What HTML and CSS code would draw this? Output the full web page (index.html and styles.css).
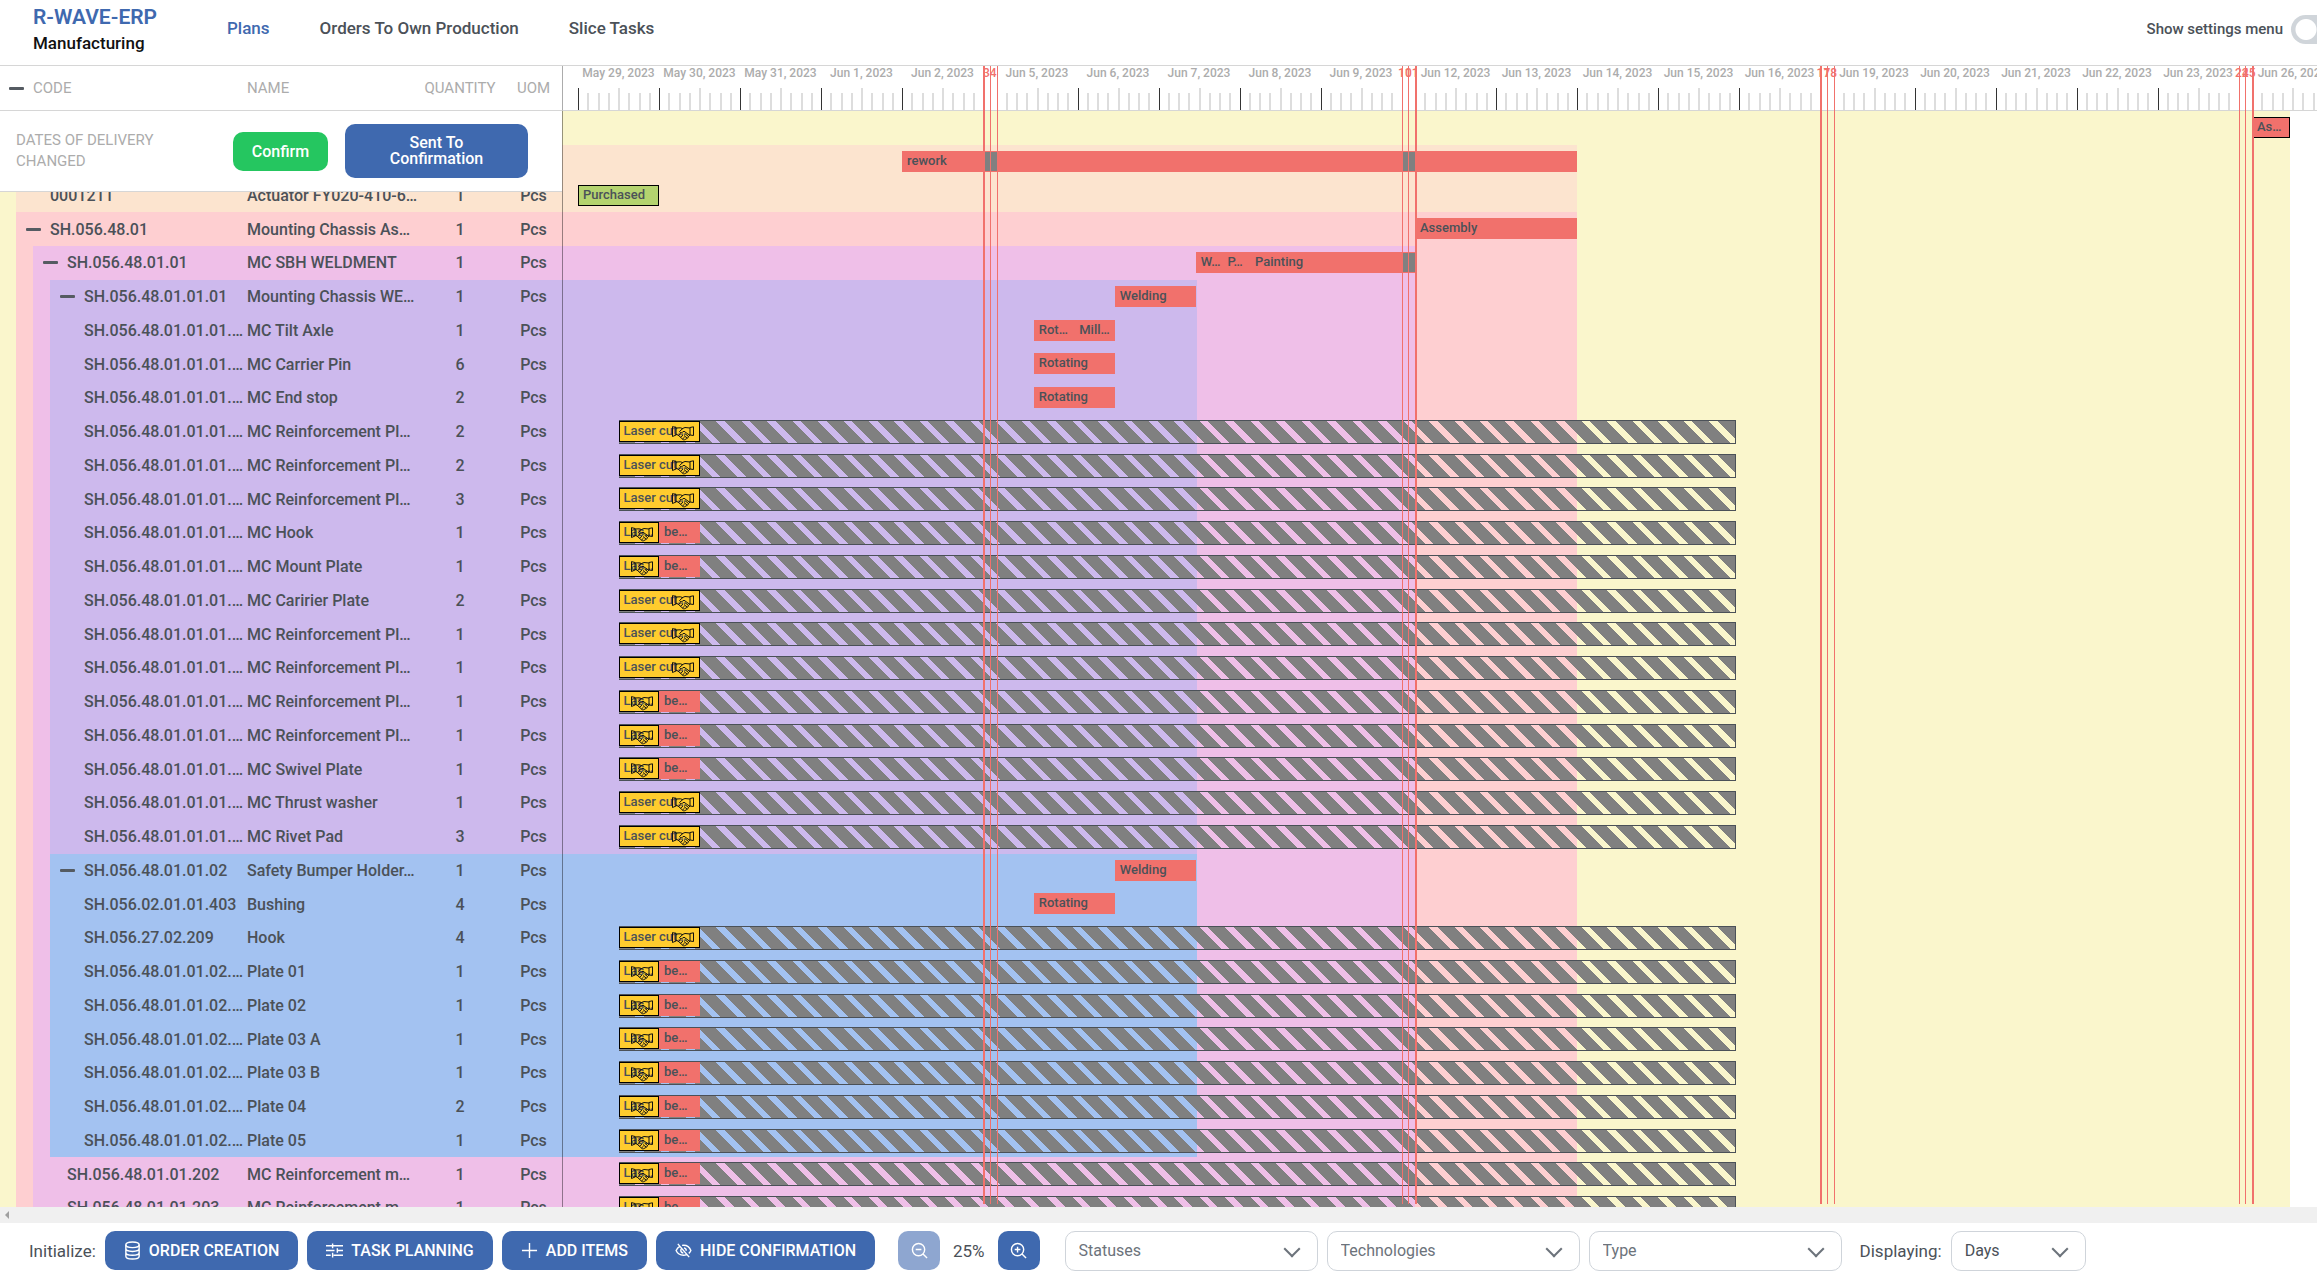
FILE: index.html
```html
<!DOCTYPE html>
<html lang="en">
<head>
<meta charset="utf-8">
<title>R-WAVE-ERP Manufacturing</title>
<link rel="stylesheet" href="styles.css">
</head>
<body>
<svg class="sprite" aria-hidden="true">
  <symbol id="i-handshake" viewBox="0 0 22 15"><path d="M.5.600L4 1.500v7.500L.5 10.500zM21.500.800L18 1.500v7.500l3.500.500zM4 2l4.500-.200 2.500 1M18 2l-5-.500-2 .800L7.500 5.500c.5 1.500 2 1.300 3 .700l1.500-1 6 4.300M4 8.500l2 .500 5 4.500c1 .800 1.800.500 2-.300 1.200.300 1.800-.300 1.900-1.200 1 .100 1.700-.600 1.600-1.500L18 9M6.500 9.500L9 7.500M8.500 11.200l2.500-2M10.500 13l2-1.800M12 9.500l3 2.500M13.500 8l3 2.500"/></symbol>
  <symbol id="i-db" viewBox="0 0 16 20"><ellipse cx="8" cy="4" rx="7" ry="3"/><path d="M1 4v12c0 1.700 3 3 7 3s7-1.300 7-3V4M1 8c0 1.700 3 3 7 3s7-1.300 7-3M1 12c0 1.700 3 3 7 3s7-1.300 7-3"/></symbol>
  <symbol id="i-sliders" viewBox="0 0 18 18"><path d="M0 4h9M9 4h9M7 1.500v5M0 9h9M12 9h6M12 6.500v5M0 14h5M8 14h10M7 11.500v5"/></symbol>
  <symbol id="i-plus" viewBox="0 0 18 18"><path d="M9 1v16M1 9h16"/></symbol>
  <symbol id="i-eye-off" viewBox="0 0 18 16"><path d="M5.500 3.300C3.500 4.300 2 6 1.200 8c1.300 3 4.200 5 7.800 5 1.100 0 2.200-.2 3.100-.6M7.500 2.600C12 2 15.500 4.500 16.800 8c-.5 1.200-1.200 2.200-2.200 3M3 1l12 14M6.800 6c-1.500 1.800-.4 4.500 2 4.700M9.500 5.200c1.500.3 2.500 1.500 2.400 3"/></symbol>
  <symbol id="i-zoom-out" viewBox="0 0 18 18"><circle cx="8" cy="8" r="6.500"/><path d="M12.700 12.700L17 17M5 8h6"/></symbol>
  <symbol id="i-zoom-in" viewBox="0 0 18 18"><circle cx="8" cy="8" r="6.500"/><path d="M12.700 12.700L17 17M5 8h6M8 5v6"/></symbol>
</svg>
<header class="topbar">
  <div class="brand"><strong>R-WAVE-ERP</strong><span>Manufacturing</span></div>
  <nav class="nav">
    <a class="active" href="#plans">Plans</a>
    <a href="#orders">Orders To Own Production</a>
    <a href="#slices">Slice Tasks</a>
  </nav>
  <label class="settings">Show settings menu <input type="checkbox" class="switch"></label>
</header>

<main class="plan">
  <div class="plan-head">
    <button class="collapse" aria-label="Collapse all"></button>
    <span>CODE</span><span>NAME</span><span class="center">QUANTITY</span><span class="center">UOM</span>
  </div>
  <div class="scale" id="scale"></div>
  <div class="plan-body">
    <div class="bands" id="bands"></div>
    <table class="items"><tbody id="items"></tbody></table>
    <div class="chart" id="chart"></div>
    <section class="notice">
      <p>DATES OF DELIVERY CHANGED</p>
      <button class="btn green">Confirm</button>
      <button class="btn send">Sent To Confirmation</button>
    </section>
  </div>
  <div class="weekends" id="weekends"></div>
</main>

<div class="hscroll"><i></i></div>

<footer class="toolbar">
  <span class="caption">Initialize:</span>
  <button class="btn"><svg class="db"><use href="#i-db"/></svg>ORDER CREATION</button>
  <button class="btn"><svg><use href="#i-sliders"/></svg>TASK PLANNING</button>
  <button class="btn"><svg><use href="#i-plus"/></svg>ADD ITEMS</button>
  <button class="btn"><svg><use href="#i-eye-off"/></svg>HIDE CONFIRMATION</button>
  <div class="zoom">
    <button class="btn icon" aria-label="Zoom out" disabled><svg><use href="#i-zoom-out"/></svg></button>
    <output class="caption">25%</output>
    <button class="btn icon" aria-label="Zoom in"><svg><use href="#i-zoom-in"/></svg></button>
  </div>
  <div class="filters">
    <span class="select"><select aria-label="Statuses"><option>Statuses</option></select></span>
    <span class="select"><select aria-label="Technologies"><option>Technologies</option></select></span>
    <span class="select"><select aria-label="Type"><option>Type</option></select></span>
  </div>
  <label class="caption" for="unit">Displaying:</label>
  <span class="select days"><select id="unit"><option>Days</option></select></span>
</footer>
<script src="app.js"></script>
</body>
</html>
```
FILE: styles.css
```css
:root {
  --blue: #3f69af;
  --red: #f1716c;
  --text: #4b5158;
  --muted: #acacac;
  --line: #d6d6d6;
  --tree: 562px;
  --rows-height: 1215px;
}
* { box-sizing: border-box; }
body {
  margin: 0;
  height: 100vh;
  display: flex;
  flex-direction: column;
  overflow: hidden;
  font: 500 16px Roboto, sans-serif;
  color: var(--text);
  background: #fff;
}
button, select { font: inherit; color: inherit; border: 0; background: none; padding: 0; }
.sprite { position: absolute; width: 0; height: 0; }
svg { fill: none; stroke: currentColor; }

.topbar {
  flex: none;
  height: 66px;
  display: flex;
  align-items: center;
  padding-left: 33px;
  border-bottom: 1px solid var(--line);
  overflow: hidden;
}
.brand { width: 194px; display: flex; flex-direction: column; gap: 2px; padding-bottom: 7px; color: #111; font-size: 17px; line-height: 22px; }
.brand strong { font-size: 21px; font-weight: 600; color: var(--blue); line-height: 26px; }
.nav { display: flex; gap: 50px; padding-bottom: 9px; font-size: 17px; }
.nav a { color: inherit; text-decoration: none; }
.nav .active { color: var(--blue); }
.settings { margin-left: auto; margin-right: -26px; display: flex; align-items: center; gap: 8px; padding-bottom: 7px; font-size: 15px; white-space: nowrap; }
.switch {
  appearance: none;
  margin: 0;
  width: 52px;
  height: 29px;
  border-radius: 15px;
  background: radial-gradient(circle at 15px 50%, #fff 10px, #d0d5da 11px);
}

.plan {
  flex: 1;
  min-height: 0;
  display: grid;
  grid-template: 45px 1fr / var(--tree) 1fr;
  position: relative;
  overflow: hidden;
}
.plan-head, .items tr { display: grid; grid-template-columns: 247px 166px 94px 53px; align-items: center; }
.plan-head {
  grid-template-columns: 33px 214px 166px 94px 53px;
  font-size: 15px;
  font-weight: 400;
  color: var(--muted);
  border-bottom: 1px solid var(--line);
}
.center { text-align: center; }
.collapse { width: 15px; height: 3px; border-radius: 1px; background: #555b62; flex: none; }
.plan-head .collapse { margin-left: 9px; }

.scale { display: flex; padding-left: 15px; border-left: 1px solid var(--muted); border-bottom: 1px solid var(--line); overflow: hidden; }
.day { flex: none; display: flex; flex-direction: column; align-items: center; justify-content: space-between; font-size: 12px; line-height: 14px; color: var(--muted); white-space: nowrap; }
.day.off { color: var(--red); }
.hours { align-self: stretch; height: 22px; display: flex; align-items: flex-end; }
.hours i { flex: 1; height: 17px; border-left: 2px solid #ddd; }
.hours i:nth-child(5) { height: 22px; }
.hours i:first-child { height: 22px; border-left: 1px solid #333; }
.monday .hours i:first-child { border-color: transparent; }

.plan-body { grid-column: 1 / -1; position: relative; overflow: hidden; display: grid; grid-template-columns: var(--tree) 1fr; }
.bands, .items tbody, .chart { display: grid; grid-template-rows: repeat(36, 1fr); height: var(--rows-height); }
.bands { position: absolute; inset: 0 0 auto; grid-template-columns: 1fr; }
.bands i { grid-column: 1; }
.b-yellow { background: #faf6cc; }
.b-peach { background: #fce4cf; }
.b-rose { background: #fecfd1; }
.b-pink { background: #efbfe8; }
.b-violet { background: #cdb9ed; }
.b-blue { background: #a3c2f1; }

.items { display: block; position: relative; }
.items td { padding: 0; white-space: nowrap; }
.items td:nth-child(1) { display: flex; align-items: center; gap: 9px; }
.items td:nth-child(n+3) { text-align: center; }

.chart { position: relative; grid-template-columns: 1fr; box-shadow: inset 1px 0 #0006; overflow: hidden; }
.lane { position: relative; }
.bar {
  position: absolute;
  top: 6px;
  height: 21px;
  padding: 0 4px;
  border: 1px solid var(--red);
  background: var(--red);
  font-size: 13px;
  line-height: 17px;
  white-space: nowrap;
}
.bar.bought { background: #b4d36f; border-color: #000; }
.bar.laser { background: #ffcc2e; border-color: #000; }
.bar.outlined { border-color: #000; }
.bar svg { position: absolute; right: 5px; top: 4px; width: 22px; height: 15px; color: #111; stroke-width: 1; }
.gap { position: absolute; top: 7px; height: 19px; background: #808080; }
.slack {
  position: absolute;
  top: 5px;
  height: 24px;
  border: solid #4b5158;
  border-width: 1px 1px 1px 0;
  background: repeating-linear-gradient(45deg, #808080 0 12px, transparent 12px 18px);
}

.weekends { position: absolute; inset: 0 0 3px var(--tree); pointer-events: none; overflow: hidden; }
.weekends i { position: absolute; top: 0; bottom: 0; background: var(--red); }

.notice {
  position: absolute;
  top: 0;
  left: 0;
  width: var(--tree);
  height: 81px;
  display: flex;
  align-items: center;
  padding: 0 34px 0 16px;
  border-bottom: 1px solid var(--line);
  background: #fff;
}
.notice p { margin: 0; width: 217px; padding-right: 60px; font-size: 15px; line-height: 21px; font-weight: 400; color: var(--muted); }
.btn {
  height: 39px;
  display: flex;
  align-items: center;
  justify-content: center;
  border-radius: 10px;
  padding: 0 19px;
  color: #fff;
  background: var(--blue);
  white-space: nowrap;
}
.btn.green { background: #25c660; width: 95px; margin-right: 17px; }
.notice .send { flex: 1; height: 54px; padding: 0 40px; line-height: 16px; white-space: normal; }

.hscroll { flex: none; height: 16px; background: #f0f0f0; padding: 4px 5px; }
.hscroll i { display: block; width: 0; border: solid transparent; border-width: 4px 4px 4px 0; border-right-color: #a0a0a0; }

.toolbar { flex: none; height: 55px; display: flex; align-items: center; gap: 9px; padding: 0 29px; }
.caption { font-size: 17px; font-weight: 400; }
.toolbar .btn { gap: 8px; }
.toolbar svg { width: 17px; height: 17px; stroke-width: 1.5; }
.toolbar .db { height: 19px; }
.zoom { display: flex; align-items: center; gap: 13px; margin: 0 16px 0 14px; }
.toolbar .icon { width: 42px; padding: 0; }
.icon:disabled { background: #8ea6d0; }
.filters { display: flex; gap: 9px; margin-right: 9px; }
.select { position: relative; width: 253px; height: 40px; }
.select.days { width: 135px; }
.select select { appearance: none; width: 100%; height: 100%; padding: 0 13px; border: 1px solid #cfd4da; border-radius: 10px; background: #fff; font-weight: 400; color: #6c737b; }
.select.days select { color: var(--text); }
.select::after {
  content: "";
  position: absolute;
  right: 20px;
  top: 12px;
  width: 10px;
  height: 10px;
  border: solid #6c737b;
  border-width: 0 2px 2px 0;
  transform: rotate(45deg);
}
```
FILE: app.js
```js
const DAY = 81, OFF = DAY / 12, ORIGIN = 16;

const timeline = [
  ['May 29, 2023'], ['May 30, 2023'], ['May 31, 2023'], ['Jun 1, 2023'], ['Jun 2, 2023'], [3, 4],
  ['Jun 5, 2023'], ['Jun 6, 2023'], ['Jun 7, 2023'], ['Jun 8, 2023'], ['Jun 9, 2023'], [10, 11],
  ['Jun 12, 2023'], ['Jun 13, 2023'], ['Jun 14, 2023'], ['Jun 15, 2023'], ['Jun 16, 2023'], [17, 18],
  ['Jun 19, 2023'], ['Jun 20, 2023'], ['Jun 21, 2023'], ['Jun 22, 2023'], ['Jun 23, 2023'], [24, 25],
  ['Jun 26, 2023'],
];

/* Horizontal position of a moment counted in working days from May 29. */
const at = (days, after = true) => {
  const weeks = after ? Math.floor(days / 5) : Math.ceil(days / 5) - 1;
  return ORIGIN + days * DAY + Math.max(0, weeks) * OFF * 2;
};

const el = (parent, tag, cls, style, html = '') => {
  const node = document.createElement(tag);
  if (cls) node.className = cls;
  Object.assign(node.style, style);
  node.innerHTML = html;
  return parent.appendChild(node);
};
const byId = id => document.getElementById(id);
const px = n => n + 'px';

const scale = byId('scale'), weekends = byId('weekends');
timeline.forEach((entry, i) => {
  if (entry.length === 2) {
    entry.forEach(d => el(scale, 'div', 'day off', { width: px(OFF) }, d));
    return;
  }
  const monday = i > 0 && timeline[i - 1].length === 2;
  el(scale, 'div', monday ? 'day monday' : 'day', { width: px(DAY) },
    `<span>${entry[0]}</span><div class="hours">${'<i></i>'.repeat(8)}</div>`);
});
[[2, 1, 1], [1, 1, 2], [2, 1, 1], [1, 1, 2]].forEach((widths, week) => {
  const start = at((week + 1) * 5, false);
  widths.forEach((w, i) => el(weekends, 'i', '', { left: px(Math.round(start + i * OFF)), width: px(w) }));
});

/* Tree bands: colour, first row, last row, left edge, end in working days. */
const TREE = 562;
[
  ['yellow', 0, 36, 0, 20.47],
  ['peach', 1, 3, 16, 12],
  ['rose', 3, 36, 16, 12],
  ['pink', 4, 36, 33, 10.001],
  ['violet', 5, 22, 50, 7.48],
  ['blue', 22, 31, 50, 7.48],
].forEach(([color, from, to, left, end]) => {
  const right = TREE + at(end, false);
  el(byId('bands'), 'i', 'b-' + color, { gridRow: `${from + 1} / ${to + 1}`, marginLeft: px(left), width: px(right - left) });
});

const L = 'laser', S = 'split', SUB = 'SH.056.48.01.01.01.…', SUB2 = 'SH.056.48.01.01.02.…';
const rows = [
  ['0001211', 'Actuator FY020-410-6…', 1, 2, false, 'bought'],
  ['SH.056.48.01', 'Mounting Chassis As…', 1, 1, true, 'assembly'],
  ['SH.056.48.01.01', 'MC SBH WELDMENT', 1, 2, true, 'paint'],
  ['SH.056.48.01.01.01', 'Mounting Chassis WE…', 1, 3, true, 'weld'],
  [SUB, 'MC Tilt Axle', 1, 4, false, 'mill'],
  [SUB, 'MC Carrier Pin', 6, 4, false, 'rotate'],
  [SUB, 'MC End stop', 2, 4, false, 'rotate'],
  [SUB, 'MC Reinforcement Pl…', 2, 4, false, L],
  [SUB, 'MC Reinforcement Pl…', 2, 4, false, L],
  [SUB, 'MC Reinforcement Pl…', 3, 4, false, L],
  [SUB, 'MC Hook', 1, 4, false, S],
  [SUB, 'MC Mount Plate', 1, 4, false, S],
  [SUB, 'MC Caririer Plate', 2, 4, false, L],
  [SUB, 'MC Reinforcement Pl…', 1, 4, false, L],
  [SUB, 'MC Reinforcement Pl…', 1, 4, false, L],
  [SUB, 'MC Reinforcement Pl…', 1, 4, false, S],
  [SUB, 'MC Reinforcement Pl…', 1, 4, false, S],
  [SUB, 'MC Swivel Plate', 1, 4, false, S],
  [SUB, 'MC Thrust washer', 1, 4, false, L],
  [SUB, 'MC Rivet Pad', 3, 4, false, L],
  ['SH.056.48.01.01.02', 'Safety Bumper Holder…', 1, 3, true, 'weld'],
  ['SH.056.02.01.01.403', 'Bushing', 4, 4, false, 'rotate'],
  ['SH.056.27.02.209', 'Hook', 4, 4, false, L],
  [SUB2, 'Plate 01', 1, 4, false, S],
  [SUB2, 'Plate 02', 1, 4, false, S],
  [SUB2, 'Plate 03 A', 1, 4, false, S],
  [SUB2, 'Plate 03 B', 1, 4, false, S],
  [SUB2, 'Plate 04', 2, 4, false, S],
  [SUB2, 'Plate 05', 1, 4, false, S],
  ['SH.056.48.01.01.202', 'MC Reinforcement m…', 1, 3, false, S],
  ['SH.056.48.01.01.203', 'MC Reinforcement m…', 1, 3, false, S],
];

/* Operations per kind of row: start, end, label, style. */
const operations = {
  order: [[20, 20.47, 'As…', 'outlined']],
  rework: [[4, 12, 'rework', '']],
  bought: [[0, 1, 'Purchased', 'bought']],
  assembly: [[10, 12, 'Assembly', '']],
  paint: [[7.46, 7.79, 'W…', ''], [7.79, 8.13, 'P…', ''], [8.13, 10.001, 'Painting', '']],
  weld: [[6.46, 7.46, 'Welding', '']],
  mill: [[5.46, 5.96, 'Rot…', ''], [5.96, 6.46, 'Mill…', '']],
  rotate: [[5.46, 6.46, 'Rotating', '']],
  laser: [[0.5, 1.5, 'Laser cut…', 'laser']],
  split: [[0.5, 1, 'Las…', 'laser'], [1, 1.5, 'be…', '']],
};

const chart = byId('chart');
const drawLane = kind => {
  const lane = el(chart, 'div', 'lane');
  if (kind === 'laser' || kind === 'split') {
    el(lane, 'div', 'slack', { left: px(at(0.5)), width: px(at(13.96) - at(0.5)) });
  }
  operations[kind].forEach(([from, to, label, style]) => {
    const left = at(from), width = at(to, false) - left;
    const icon = style === 'laser' ? '<svg><use href="#i-handshake"/></svg>' : '';
    el(lane, 'div', 'bar ' + style, { left: px(left), width: px(width) }, label + icon);
    [5, 10].forEach(day => {
      if (from < day && to > day) {
        el(lane, 'i', 'gap', { left: px(at(day, false) + 1), width: px(OFF * 2 - 1) });
      }
    });
  });
};

['order', 'rework'].forEach(drawLane);
rows.forEach(([code, name, qty, depth, open, kind], i) => {
  const indent = open ? 9 + depth * 17 : [0, 0, 50, 67, 84][depth];
  el(byId('items'), 'tr', '', { gridRow: i + 3 },
    `<td style="padding-left:${indent}px">${open ? '<button class="collapse" aria-label="Collapse"></button>' : ''}${code}</td>` +
    `<td>${name}</td><td>${qty}</td><td>Pcs</td>`);
  drawLane(kind);
});
```
